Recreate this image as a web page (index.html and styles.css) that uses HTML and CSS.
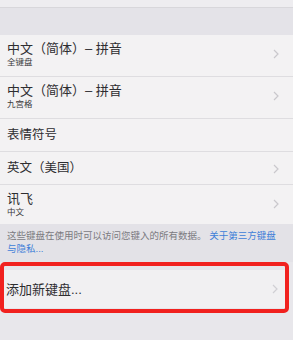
FILE: index.html
```html
<!DOCTYPE html>
<html>
<head>
    <meta charset="utf-8" />
    <title>键盘</title>
    <link rel="stylesheet" href="styles.css">
</head>
<body>
    <div class="top"></div>
    <div class="gap"></div>
    <ul class="list">
        <li class="row two">
            <div class="text">
                <div class="title">中文（简体）– 拼音</div>
                <div class="sub">全键盘</div>
            </div>
            <svg class="chev" width="6" height="10" viewBox="0 0 6 10"><path d="M1 1 L5 5 L1 9" fill="none" stroke="#c9c8cc" stroke-width="1.2" /></svg>
        </li>
        <li class="row two">
            <div class="text">
                <div class="title">中文（简体）– 拼音</div>
                <div class="sub">九宫格</div>
            </div>
            <svg class="chev" width="6" height="10" viewBox="0 0 6 10"><path d="M1 1 L5 5 L1 9" fill="none" stroke="#c9c8cc" stroke-width="1.2" /></svg>
        </li>
        <li class="row one">
            <div class="title small">表情符号</div>
        </li>
        <li class="row one">
            <div class="title small">英文（美国）</div>
            <svg class="chev" width="6" height="10" viewBox="0 0 6 10"><path d="M1 1 L5 5 L1 9" fill="none" stroke="#c9c8cc" stroke-width="1.2" /></svg>
        </li>
        <li class="row two last">
            <div class="text">
                <div class="title">讯飞</div>
                <div class="sub">中文</div>
            </div>
            <svg class="chev" width="6" height="10" viewBox="0 0 6 10"><path d="M1 1 L5 5 L1 9" fill="none" stroke="#c9c8cc" stroke-width="1.2" /></svg>
        </li>
    </ul>
    <p class="note">这些键盘在使用时可以访问您键入的所有数据。 <span class="link">关于第三方键盘</span><br><span class="link">与隐私...</span></p>
    <div class="mark">
        <div class="add">
            <div class="title">添加新键盘...</div>
            <svg class="chev" width="6" height="10" viewBox="0 0 6 10"><path d="M1 1 L5 5 L1 9" fill="none" stroke="#d0cfd4" stroke-width="1.2" /></svg>
        </div>
    </div>
</body>
</html>
```

FILE: styles.css
```css
html, body {
    overflow: hidden;
}

body, div, ul, li, p {
    margin: 0;
    padding: 0;
}

body {
    background: #e8e7eb;
    font-family: "Liberation Sans", "Noto Sans CJK SC", sans-serif;
    color: #2e2d30;
}

.top {
    height: 7px;
    background: #eeedf0;
    border-bottom: 1px solid #d8d7db;
}

.gap {
    height: 27px;
    background: #e4e3e8;
}

.list {
    list-style-type: none;
    background: #f3f2f3;
}

.row {
    display: flex;
    align-items: center;
    justify-content: space-between;
    padding: 0 14px 0 7px;
    border-bottom: 1px solid #dedde0;
}

    .row.two {
        padding-top: 5px;
        padding-bottom: 8px;
    }

    .row.one {
        padding-top: 8px;
        padding-bottom: 7px;
    }

    .row.last {
        border-bottom: none;
        padding-bottom: 6px;
    }

.title {
    font-size: 13px;
    line-height: 17px;
}

    .title.small {
        font-size: 12.5px;
    }

.sub {
    font-size: 8.5px;
    line-height: 11px;
    color: #3a393b;
}

.note {
    background: #e3e2e7;
    padding: 5px 10px 7px 7px;
    font-size: 9.5px;
    line-height: 13px;
    color: #7b7a7f;
}

.link {
    color: #3d7ed8;
}

.mark {
    width: 281px;
    border: 4px solid #f1211f;
    border-radius: 5px;
    padding: 4px 0 1px;
    background: #e6e5ea;
}

.add {
    display: flex;
    align-items: center;
    justify-content: space-between;
    height: 38px;
    padding: 0 7px 0 2px;
    background: #f1f0f2;
}
```
